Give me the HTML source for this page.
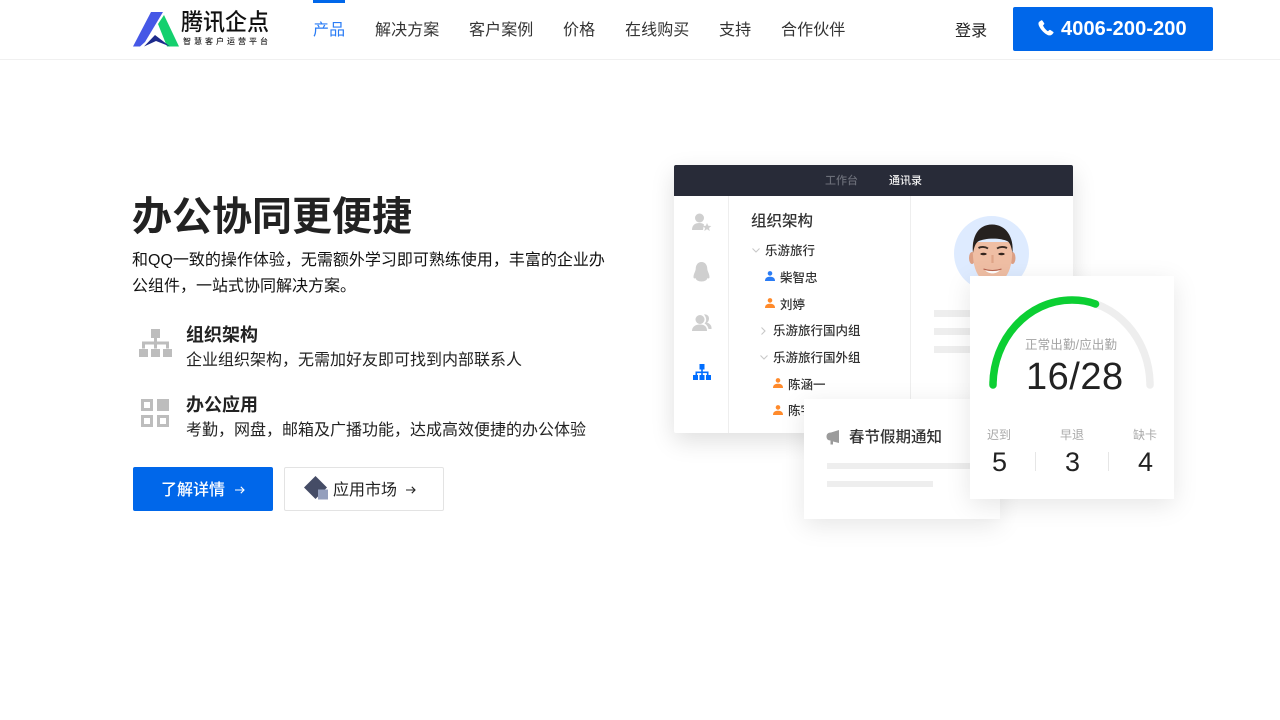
<!DOCTYPE html>
<html lang="zh-CN">
<head>
<meta charset="utf-8">
<title>腾讯企点</title>
<style>
*{margin:0;padding:0;box-sizing:border-box}
html,body{width:1280px;height:720px;overflow:hidden;background:#fff}
body{position:relative;font-family:"Liberation Sans","Noto Sans CJK SC","WenQuanYi Zen Hei",sans-serif;color:#222}
.t{position:absolute;white-space:nowrap;line-height:1}
.a{position:absolute}
.nav{font-size:16px;color:#333;top:21px;line-height:18px;letter-spacing:.1px}
.w{position:absolute;left:0;top:0;width:1280px;height:720px;filter:blur(.35px)}
.n{font-size:12.5px;line-height:14px;color:#333;font-weight:500}
</style>
</head>
<body>
<!-- header -->
<div class="a" style="left:0;top:0;width:1280px;height:60px;border-bottom:1px solid #f0f0f0"></div>
<svg class="a" style="left:133px;top:12px" width="47" height="35" viewBox="0 0 47 35">
<polygon points="0,34.500 18,0 30,0 12,30 7,34.500" fill="#4658e6"/>
<polygon points="25,12 31,3 46,34.500 34,34.500" fill="#14d06e"/>
<polygon points="11,34.500 22,23 37,34.500 23,29" fill="#1d2a8c"/>
</svg>
<div class="t" style="left:181px;top:9px;font-size:22px;line-height:26px;color:#111;font-weight:500;transform:scaleY(1.06);transform-origin:0 0">腾讯企点</div>
<div class="t" style="left:183px;top:37px;font-size:8px;line-height:10px;letter-spacing:3px;color:#222;font-weight:500">智慧客户运营平台</div>
<div class="a" style="left:313px;top:0;width:32px;height:3px;background:#0067ea"></div>
<div class="t nav" style="left:313px;top:22px;color:#2a7cf5">产品</div>
<div class="t nav" style="left:375px;top:22px">解决方案</div>
<div class="t nav" style="left:469px;top:22px">客户案例</div>
<div class="t nav" style="left:563px;top:22px">价格</div>
<div class="t nav" style="left:625px;top:22px">在线购买</div>
<div class="t nav" style="left:719px;top:22px">支持</div>
<div class="t nav" style="left:781px;top:22px">合作伙伴</div>
<div class="t nav" style="left:955px;top:23px;color:#222">登录</div>
<div class="a" style="left:1013px;top:7px;width:200px;height:44px;background:#0067ea;border-radius:2px"></div>
<svg class="a" style="left:1038px;top:20px" width="16" height="16" viewBox="0 0 16 16">
<path d="M3.200 0.400 L1.200 1.800 C0.200 2.600 0.200 4.500 1.400 6.800 C3.200 10.200 6.200 13.400 9.600 15 C11.600 15.800 13.200 15.400 14.200 14.400 L15.400 13 C15.700 12.600 15.600 12.200 15.200 11.900 L12.400 10 C11.900 9.700 11.500 9.800 11.100 10.200 L10 11.300 C8.100 10.400 5.700 7.400 5 5.400 L6 4.400 C6.400 4 6.400 3.600 6.200 3.200 L4.400 0.600 C4.100 0.200 3.600 0.100 3.200 0.400 Z" fill="#fff"/>
</svg>
<div class="t" style="left:1061px;top:18px;font-size:20px;line-height:23px;font-weight:700;color:#fff;letter-spacing:.1px">4006-200-200</div>

<!-- left copy -->
<div class="t" style="left:132px;top:194px;font-size:40px;line-height:46px;font-weight:700;color:#222">办公协同更便捷</div>
<div class="a" style="left:132px;top:248px;width:475px;height:52px;overflow:hidden;font-size:16px;line-height:26px;color:#111"><div style="white-space:nowrap">和QQ一致的操作体验，无需额外学习即可熟练使用，丰富的企业办</div><div style="white-space:nowrap">公组件，一站式协同解决方案。</div></div>

<svg class="a" style="left:139px;top:329px" width="33" height="28" viewBox="0 0 33 28" fill="#bdbdbd">
<rect x="12" y="0" width="9" height="9"/>
<rect x="15" y="9" width="3" height="6"/>
<rect x="3" y="12.500" width="27" height="3"/>
<rect x="3" y="12.500" width="3" height="7"/>
<rect x="27" y="12.500" width="3" height="7"/>
<rect x="15" y="12.500" width="3" height="7"/>
<rect x="0" y="20" width="9" height="8"/>
<rect x="12" y="20" width="9" height="8"/>
<rect x="24" y="20" width="9" height="8"/>
</svg>
<div class="t" style="left:186px;top:323px;font-size:18px;line-height:24px;font-weight:700">组织架构</div>
<div class="t" style="left:186px;top:350px;font-size:16px;line-height:22px;color:#222">企业组织架构，无需加好友即可找到内部联系人</div>

<svg class="a" style="left:141px;top:399px" width="28" height="28" viewBox="0 0 28 28">
<path fill="#bdbdbd" fill-rule="evenodd" d="M0 0H12V12H0ZM3 3V9H9V3Z"/>
<rect x="16" y="0" width="12" height="12" fill="#bdbdbd"/>
<path fill="#bdbdbd" fill-rule="evenodd" d="M0 16H12V28H0ZM3 19V25H9V19Z"/>
<path fill="#bdbdbd" fill-rule="evenodd" d="M16 16H28V28H16ZM19 19V25H25V19Z"/>
</svg>
<div class="t" style="left:186px;top:393px;font-size:18px;line-height:24px;font-weight:700">办公应用</div>
<div class="t" style="left:186px;top:420px;font-size:16px;line-height:22px;color:#222">考勤，网盘，邮箱及广播功能，达成高效便捷的办公体验</div>

<!-- buttons -->
<div class="a" style="left:133px;top:467px;width:140px;height:44px;background:#0067ea;border-radius:2px"></div>
<div class="t" style="left:161px;top:481px;font-size:16px;line-height:19px;color:#fff;font-weight:500">了解详情</div>
<svg class="a" style="left:234px;top:485px" width="12" height="10" viewBox="0 0 12 10"><path d="M1 5H10M6.800 1.800L10 5L6.800 8.200" fill="none" stroke="#fff" stroke-width="1.100"/></svg>
<div class="a" style="left:284px;top:467px;width:160px;height:44px;background:#fff;border:1px solid #e3e3e3;border-radius:2px"></div>
<svg class="a" style="left:304px;top:476px" width="25" height="25" viewBox="0 0 25 25">
<polygon points="11.500,0 23,11.500 11.500,23 0,11.500" fill="#454c66"/>
<rect x="14" y="13.500" width="10" height="10" fill="#949fbd"/>
</svg>
<div class="t" style="left:333px;top:481px;font-size:16px;line-height:19px;color:#222">应用市场</div>
<svg class="a" style="left:405px;top:485px" width="12" height="10" viewBox="0 0 12 10"><path d="M1 5H10M6.800 1.800L10 5L6.800 8.200" fill="none" stroke="#222" stroke-width="1.100"/></svg>

<div class="w">
<!-- main illustration card -->
<div class="a" style="left:674px;top:165px;width:399px;height:268px;background:#fff;border-radius:2px;box-shadow:0 8px 24px rgba(0,0,0,.13)"></div>
<div class="a" style="left:674px;top:165px;width:399px;height:31px;background:#282b38;border-radius:2px 2px 0 0"></div>
<div class="t" style="left:825px;top:175px;font-size:11px;line-height:13px;color:#6b6e78;font-weight:500">工作台</div>
<div class="t" style="left:889px;top:175px;font-size:11px;line-height:13px;color:#f2f2f2;font-weight:500">通讯录</div>
<div class="a" style="left:728px;top:196px;width:1px;height:237px;background:#eeeeee"></div>
<div class="a" style="left:910px;top:196px;width:1px;height:237px;background:#eeeeee"></div>

<!-- sidebar icons -->
<svg class="a" style="left:692px;top:213px" width="20" height="18" viewBox="0 0 20 18" fill="#cfcfcf">
<circle cx="7.500" cy="5" r="4.500"/><path d="M0 17C0 12 3 10 7.500 10C9.500 10 11 10.500 12 11.500L11 17Z"/>
<polygon points="15,10 16.300,12.800 19.300,13 17,15 17.800,18 15,16.300 12.300,18 13,15 10.800,13 13.800,12.800"/>
</svg>
<svg class="a" style="left:693px;top:262px" width="17" height="20" viewBox="0 0 17 20" fill="#cfcfcf">
<path d="M8.500 0C12.500 0 14.300 3.500 14.300 7C14.300 9 16.500 12 16.500 15C16.500 17 15 16.500 14.500 16C14 18 12 19.500 8.500 19.500C5 19.500 3 18 2.500 16C2 16.500 0.500 17 0.500 15C0.500 12 2.700 9 2.700 7C2.700 3.500 4.500 0 8.500 0Z"/>
</svg>
<svg class="a" style="left:692px;top:314px" width="20" height="17" viewBox="0 0 20 17" fill="#cfcfcf">
<circle cx="8" cy="5.500" r="4.500"/><path d="M0 17C0 12.500 3.500 10.500 8 10.500C12.500 10.500 15 12.500 15 17Z"/>
<path d="M12 0.500C15 0 17 2 17 4.500C17 6.500 16 8 15 8.500C18 9.500 20 12 19.500 15H16.500C16 12.500 14.500 10.500 12.500 9.500C14 8 14.500 6.500 14 4.500C13.800 3 13 1.500 12 0.500Z"/>
</svg>
<svg class="a" style="left:693px;top:364px" width="18" height="16" viewBox="0 0 18 16" fill="#006eff">
<rect x="6.500" y="0" width="5" height="5.500"/><rect x="8.200" y="5" width="1.600" height="6"/>
<rect x="2.500" y="7.500" width="13" height="1.600"/><rect x="2.500" y="7.500" width="1.600" height="4"/><rect x="13.900" y="7.500" width="1.600" height="4"/>
<rect x="0" y="11" width="5" height="5"/><rect x="6.500" y="11" width="5" height="5"/><rect x="13" y="11" width="5" height="5"/>
</svg>

<!-- tree -->
<div class="t" style="left:751px;top:213px;font-size:15.500px;line-height:17px;color:#333;font-weight:500">组织架构</div>
<svg class="a" style="left:751px;top:247px" width="10" height="7" viewBox="0 0 10 7"><path d="M1.500 1.500L5 5L8.500 1.500" fill="none" stroke="#c8c8c8" stroke-width="1.100"/></svg>
<div class="t n" style="left:765px;top:244px">乐游旅行</div>
<svg class="a" style="left:765px;top:271px" width="10" height="10" viewBox="0 0 10 10" fill="#2a7cf5"><circle cx="5" cy="2.400" r="2.300"/><path d="M0 10C0 7 2 5.800 5 5.800C8 5.800 10 7 10 10Z"/></svg>
<div class="t n" style="left:780px;top:271px">柴智忠</div>
<svg class="a" style="left:765px;top:298px" width="10" height="10" viewBox="0 0 10 10" fill="#ff8a2b"><circle cx="5" cy="2.400" r="2.300"/><path d="M0 10C0 7 2 5.800 5 5.800C8 5.800 10 7 10 10Z"/></svg>
<div class="t n" style="left:780px;top:298px">刘婷</div>
<svg class="a" style="left:760px;top:326px" width="8" height="10" viewBox="0 0 8 10"><path d="M1.500 1.500L5 5L1.500 8.500" fill="none" stroke="#c8c8c8" stroke-width="1.100"/></svg>
<div class="t n" style="left:773px;top:324px">乐游旅行国内组</div>
<svg class="a" style="left:759px;top:354px" width="10" height="7" viewBox="0 0 10 7"><path d="M1.500 1.500L5 5L8.500 1.500" fill="none" stroke="#c8c8c8" stroke-width="1.100"/></svg>
<div class="t n" style="left:773px;top:351px">乐游旅行国外组</div>
<svg class="a" style="left:773px;top:378px" width="10" height="10" viewBox="0 0 10 10" fill="#ff8a2b"><circle cx="5" cy="2.400" r="2.300"/><path d="M0 10C0 7 2 5.800 5 5.800C8 5.800 10 7 10 10Z"/></svg>
<div class="t n" style="left:788px;top:378px">陈涵一</div>
<svg class="a" style="left:773px;top:405px" width="10" height="10" viewBox="0 0 10 10" fill="#ff8a2b"><circle cx="5" cy="2.400" r="2.300"/><path d="M0 10C0 7 2 5.800 5 5.800C8 5.800 10 7 10 10Z"/></svg>
<div class="t n" style="left:788px;top:404px">陈宇</div>

<!-- avatar -->
<svg class="a" style="left:954px;top:216px" width="75" height="75" viewBox="0 0 75 75">
<defs><clipPath id="c"><circle cx="37.500" cy="37.500" r="37.500"/></clipPath></defs>
<circle cx="37.500" cy="37.500" r="37.500" fill="#deebff"/>
<g clip-path="url(#c)">
<ellipse cx="18" cy="42" rx="3" ry="6" fill="#dc9f84"/>
<ellipse cx="58.500" cy="42" rx="3" ry="6" fill="#dc9f84"/>
<path d="M19 26C18 44 20 56 28 64C33 67 44 67 49 64C57 56 59 44 58 26Z" fill="#efbea4"/>
<path d="M19 37C17.500 21 24 8.500 38 8.500C52 8.500 60 21 58.500 37C57.500 32 56.500 27.500 54 25.500C46 21.500 31 22 24 25.500C21 28 20 32 19 37Z" fill="#26211f"/>
<path d="M24.500 32C27 30.500 31 30.500 34 32.500M43 32.500C46 30.500 50 30.500 53 32" stroke="#3c2c24" stroke-width="1.900" fill="none"/>
<ellipse cx="29.500" cy="38" rx="3.200" ry="1.200" fill="#33241d"/>
<ellipse cx="47.500" cy="38" rx="3.200" ry="1.200" fill="#33241d"/>
<path d="M38.500 39V47" stroke="#dfa487" stroke-width="2.200" fill="none"/>
<path d="M31 54C35 55.500 42 55.500 46 54C43 58.500 34 58.500 31 54Z" fill="#fff"/>
<path d="M29.500 53C35 55 42 55 47.500 53" stroke="#b5614d" stroke-width="1" fill="none"/>
</g>
</svg>
<div class="a" style="left:934px;top:310px;width:60px;height:7px;background:#eeeeee"></div>
<div class="a" style="left:934px;top:328px;width:60px;height:7px;background:#eeeeee"></div>
<div class="a" style="left:934px;top:346px;width:60px;height:7px;background:#eeeeee"></div>

<!-- notice card -->
<div class="a" style="left:804px;top:399px;width:196px;height:120px;background:#fff;box-shadow:0 6px 24px rgba(0,0,0,.1)"></div>
<svg class="a" style="left:826px;top:430px" width="14" height="15" viewBox="0 0 14 15" fill="#9b9b9b">
<path d="M13 0V13L7 11.500V14.500H4.500V10.500C2 10.500 0.500 9 0.500 6.500C0.500 4 2 2.500 5 2.500Z"/>
</svg>
<div class="t" style="left:849px;top:429px;font-size:15.500px;line-height:17px;font-weight:500;color:#333">春节假期通知</div>
<div class="a" style="left:827px;top:463px;width:150px;height:6px;background:#eeeeee"></div>
<div class="a" style="left:827px;top:481px;width:106px;height:6px;background:#eeeeee"></div>

<!-- attendance card -->
<div class="a" style="left:970px;top:276px;width:204px;height:223px;background:#fff;box-shadow:0 6px 24px rgba(0,0,0,.1)"></div>
<svg class="a" style="left:970px;top:276px" width="204" height="130" viewBox="0 0 204 130" fill="none">
<path d="M23 109C23 64 57 24 102 24C147 24 180 64 180 109" stroke="#eeeeee" stroke-width="7.500" stroke-linecap="round"/>
<path d="M23 109C23 64 57 24 102 24C110 24 118 25 125.500 28" stroke="#0ccf33" stroke-width="7.500" stroke-linecap="round"/>
</svg>
<div class="t" style="left:1025px;top:338px;font-size:12.500px;line-height:14px;letter-spacing:.15px;color:#a3a3a3">正常出勤/应出勤</div>
<div class="t" style="left:1026px;top:355px;font-size:38px;line-height:44px;color:#222;letter-spacing:.5px">16/28</div>
<div class="t" style="left:987px;top:428px;font-size:12px;line-height:14px;color:#a9a9a9">迟到</div>
<div class="t" style="left:1060px;top:428px;font-size:12px;line-height:14px;color:#a9a9a9">早退</div>
<div class="t" style="left:1133px;top:428px;font-size:12px;line-height:14px;color:#a9a9a9">缺卡</div>
<div class="t" style="left:992px;top:447px;font-size:27px;line-height:31px;color:#222">5</div>
<div class="t" style="left:1065px;top:447px;font-size:27px;line-height:31px;color:#222">3</div>
<div class="t" style="left:1138px;top:447px;font-size:27px;line-height:31px;color:#222">4</div>
<div class="a" style="left:1035px;top:452px;width:1px;height:19px;background:#e6e6e6"></div>
<div class="a" style="left:1108px;top:452px;width:1px;height:19px;background:#e6e6e6"></div>
</div>
</body>
</html>
